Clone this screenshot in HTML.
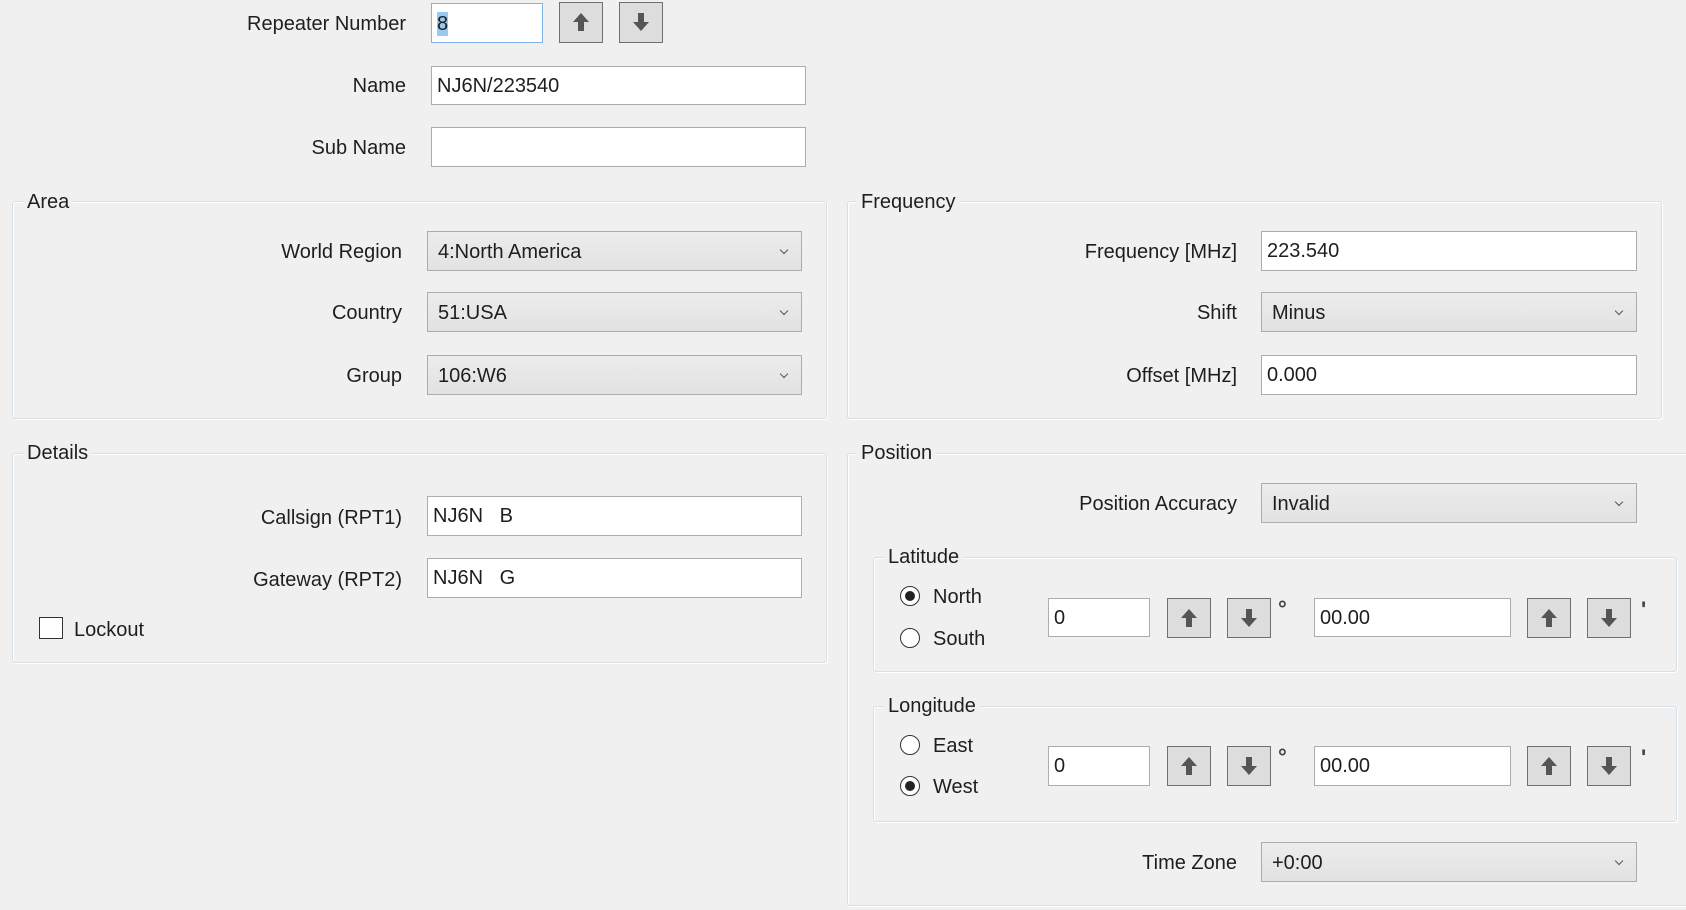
<!DOCTYPE html>
<html><head><meta charset="utf-8"><style>
body{margin:0;width:1686px;height:910px;background:#f0f0f0;font-family:"Liberation Sans",sans-serif;font-size:20px;color:#1e1e1e;overflow:hidden;position:relative}
div,span{position:absolute;box-sizing:border-box}
.lbl{text-align:right;line-height:42px;white-space:nowrap}
.inp{background:#fff;border:1px solid #abadb3;padding-left:5px;line-height:39px;white-space:nowrap}
.cmb{background:linear-gradient(#ececec,#e2e2e2);border:1px solid #acacac;padding-left:10px;line-height:40px}
.cmb:after{content:"";position:absolute;right:14px;top:15px;width:5px;height:5px;border-right:1px solid #555;border-bottom:1px solid #555;transform:rotate(45deg)}
.btn{background:#dddddd;border:1px solid #707070}
.btn svg{position:absolute;left:10px;top:8px}
.grp{border:1px solid #d5dfe5;border-radius:3px;box-shadow:inset 1px 1px 0 #fff,1px 1px 0 #fff}
.gt{background:#f0f0f0;padding:0 4px;line-height:24px}
.rad{width:20px;height:20px;border:1px solid #333;border-radius:50%;background:#fff}
.rad.on:after{content:"";position:absolute;left:4px;top:4px;width:10px;height:10px;border-radius:50%;background:#222}
.sym{font-size:22px;font-weight:bold;color:#444}
</style></head><body>
<svg width="0" height="0" style="position:absolute"><defs>
<symbol id="up" viewBox="0 0 22 22"><path d="M11 2 L19 11 H14 V20 H8 V11 H3 Z" fill="#555"/></symbol>
<symbol id="dn" viewBox="0 0 22 22"><path d="M11 20 L19 11 H14 V2 H8 V11 H3 Z" fill="#555"/></symbol>
</defs></svg>

<div class="lbl" style="left:150px;width:256px;top:3px">Repeater Number</div>
<div class="inp" style="left:431px;top:3px;width:112px;height:40px;border:1px solid #7eb4ea"><span style="left:5px;top:8px;line-height:24px;background:#99c9ef">8</span></div>
<div class="btn" style="left:559px;top:2px;width:44px;height:41px"><svg width="22" height="22"><use href="#up"/></svg></div>
<div class="btn" style="left:619px;top:2px;width:44px;height:41px"><svg width="22" height="22"><use href="#dn"/></svg></div>

<div class="lbl" style="left:150px;width:256px;top:65px">Name</div>
<div class="inp" style="left:431px;top:66px;width:375px;height:39px">NJ6N/223540</div>
<div class="lbl" style="left:150px;width:256px;top:127px">Sub Name</div>
<div class="inp" style="left:431px;top:127px;width:375px;height:40px"></div>

<div class="grp" style="left:12px;top:201px;width:815px;height:218px"></div>
<div class="gt" style="left:23px;top:190px">Area</div>
<div class="lbl" style="left:150px;width:252px;top:231px">World Region</div>
<div class="cmb" style="left:427px;top:231px;width:375px;height:40px">4:North America</div>
<div class="lbl" style="left:150px;width:252px;top:292px">Country</div>
<div class="cmb" style="left:427px;top:292px;width:375px;height:40px">51:USA</div>
<div class="lbl" style="left:150px;width:252px;top:355px">Group</div>
<div class="cmb" style="left:427px;top:355px;width:375px;height:40px">106:W6</div>

<div class="grp" style="left:847px;top:201px;width:815px;height:218px"></div>
<div class="gt" style="left:857px;top:190px">Frequency</div>
<div class="lbl" style="left:950px;width:287px;top:231px">Frequency [MHz]</div>
<div class="inp" style="left:1261px;top:231px;width:376px;height:40px">223.540</div>
<div class="lbl" style="left:950px;width:287px;top:292px">Shift</div>
<div class="cmb" style="left:1261px;top:292px;width:376px;height:40px">Minus</div>
<div class="lbl" style="left:950px;width:287px;top:355px">Offset [MHz]</div>
<div class="inp" style="left:1261px;top:355px;width:376px;height:40px">0.000</div>

<div class="grp" style="left:12px;top:453px;width:815px;height:210px"></div>
<div class="gt" style="left:23px;top:441px">Details</div>
<div class="lbl" style="left:150px;width:252px;top:497px">Callsign (RPT1)</div>
<div class="inp" style="left:427px;top:496px;width:375px;height:40px;white-space:pre">NJ6N   B</div>
<div class="lbl" style="left:150px;width:252px;top:559px">Gateway (RPT2)</div>
<div class="inp" style="left:427px;top:558px;width:375px;height:40px;white-space:pre">NJ6N   G</div>
<div style="left:39px;top:617px;width:24px;height:22px;border:1px solid #333;background:#fff"></div>
<div style="left:74px;top:617px;line-height:26px">Lockout</div>

<div class="grp" style="left:847px;top:453px;width:850px;height:453px"></div>
<div class="gt" style="left:857px;top:441px">Position</div>
<div class="lbl" style="left:950px;width:287px;top:483px">Position Accuracy</div>
<div class="cmb" style="left:1261px;top:483px;width:376px;height:40px">Invalid</div>

<div class="grp" style="left:873px;top:557px;width:804px;height:115px"></div>
<div class="gt" style="left:884px;top:545px">Latitude</div>
<div class="rad on" style="left:900px;top:586px"></div><div style="left:933px;top:584px;line-height:26px">North</div>
<div class="rad" style="left:900px;top:628px"></div><div style="left:933px;top:626px;line-height:26px">South</div>

<div class="grp" style="left:873px;top:706px;width:804px;height:116px"></div>
<div class="gt" style="left:884px;top:694px">Longitude</div>
<div class="rad" style="left:900px;top:735px"></div><div style="left:933px;top:733px;line-height:26px">East</div>
<div class="rad on" style="left:900px;top:776px"></div><div style="left:933px;top:774px;line-height:26px">West</div>

<div class="inp" style="left:1048px;top:598px;width:102px;height:39px">0</div>
<div class="btn" style="left:1167px;top:598px;width:44px;height:40px"><svg width="22" height="22"><use href="#up"/></svg></div>
<div class="btn" style="left:1227px;top:598px;width:44px;height:40px"><svg width="22" height="22"><use href="#dn"/></svg></div>
<div class="sym" style="left:1278px;top:596px">°</div>
<div class="inp" style="left:1314px;top:598px;width:197px;height:39px">00.00</div>
<div class="btn" style="left:1527px;top:598px;width:44px;height:40px"><svg width="22" height="22"><use href="#up"/></svg></div>
<div class="btn" style="left:1587px;top:598px;width:44px;height:40px"><svg width="22" height="22"><use href="#dn"/></svg></div>
<div class="sym" style="left:1641px;top:597px">'</div>

<div class="inp" style="left:1048px;top:746px;width:102px;height:40px">0</div>
<div class="btn" style="left:1167px;top:746px;width:44px;height:40px"><svg width="22" height="22"><use href="#up"/></svg></div>
<div class="btn" style="left:1227px;top:746px;width:44px;height:40px"><svg width="22" height="22"><use href="#dn"/></svg></div>
<div class="sym" style="left:1278px;top:744px">°</div>
<div class="inp" style="left:1314px;top:746px;width:197px;height:40px">00.00</div>
<div class="btn" style="left:1527px;top:746px;width:44px;height:40px"><svg width="22" height="22"><use href="#up"/></svg></div>
<div class="btn" style="left:1587px;top:746px;width:44px;height:40px"><svg width="22" height="22"><use href="#dn"/></svg></div>
<div class="sym" style="left:1641px;top:745px">'</div>

<div class="lbl" style="left:950px;width:287px;top:842px">Time Zone</div>
<div class="cmb" style="left:1261px;top:842px;width:376px;height:40px">+0:00</div>
</body></html>
